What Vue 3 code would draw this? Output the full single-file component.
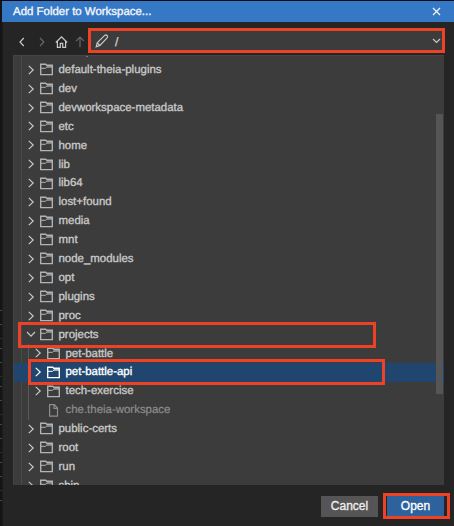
<script setup>
const names = [
  'default-theia-plugins', 'dev', 'devworkspace-metadata', 'etc', 'home', 'lib', 'lib64',
  'lost+found', 'media', 'mnt', 'node_modules', 'opt', 'plugins', 'proc',
]
const rows = [
  ...names.map((name) => ({ name })),
  { name: 'projects', open: true },
  { name: 'pet-battle', child: true },
  { name: 'pet-battle-api', child: true, selected: true },
  { name: 'tech-exercise', child: true },
  { name: 'che.theia-workspace', child: true, file: true },
  { name: 'public-certs' },
  { name: 'root' },
  { name: 'run' },
  { name: 'sbin' },
]
</script>

<template>
  <div class="screen">
    <div class="backdrop"><i v-for="n in 16" :key="n"></i></div>
    <div class="dialog">
      <header class="title">
        <span>Add Folder to Workspace...</span>
        <svg class="close" width="9" height="9" viewBox="0 0 9 9"><path d="M1 1l7 7M8 1L1 8" /></svg>
      </header>
      <nav class="toolbar">
        <svg width="8" height="12" viewBox="0 0 8 12"><path d="M5.8 2L2 6l3.8 4" /></svg>
        <svg class="dim fwd" width="8" height="12" viewBox="0 0 8 12"><path d="M2 2l3.8 4L2 10" /></svg>
        <svg class="home" width="13" height="12" viewBox="0 0 13 12"><path d="M.8 6.5L6.5 .9l5.7 5.6M2.4 5.2v6.1h2.9V7.4h2.4v3.9h2.9V5.2" /></svg>
        <svg class="dim up" width="10" height="12" viewBox="0 0 10 12"><path d="M5 11.2V1.3M1 5.2L5 1.2l4 4" /></svg>
        <div class="location">
          <svg width="14" height="14" viewBox="0 0 14 14"><path d="M1.2 12.8l1-4L9.7 1.4q1.3-.9 2.3.1t.1 2.3L4.9 11.4zM2.2 8.8l2.7 2.6" /></svg>
          <span>/</span>
          <svg class="drop" width="9" height="6" viewBox="0 0 9 6"><path d="M1 1l3.5 3.5L8 1" /></svg>
        </div>
      </nav>
      <main class="tree">
        <div class="speck"></div>
        <div v-for="r in rows" :key="r.name" class="row" :class="{ child: r.child, selected: r.selected, file: r.file }">
          <svg class="chevron" width="10" height="10" viewBox="0 0 10 10">
            <path v-if="r.open" d="M1 3l4 4.2L9 3" />
            <path v-else-if="!r.file" d="M2.8 .9L7.2 5 2.8 9.1" />
          </svg>
          <svg v-if="r.file" class="icon" width="13" height="13" viewBox="0 0 13 13"><path d="M2.6 .7h4.7l3.2 3.4v8H2.6zM7 .8v3.5h3.4" /></svg>
          <svg v-else class="icon folder" width="13" height="13" viewBox="0 0 13 13">
            <path d="M.7 1.2h5l1.1 1h5.5v9.4H.7z" />
            <path class="inner" d="M1 5.3h4.6l1.2-1.2H12" />
            <path class="tab" d="M6.6 2.4h5.6v1.6H6.6z" />
          </svg>
          <span>{{ r.name }}</span>
        </div>
        <div class="scrollbar"></div>
      </main>
      <footer class="actions">
        <button>Cancel</button>
        <button class="primary">Open</button>
      </footer>
    </div>
    <div class="mark mark-path"></div>
    <div class="mark mark-projects"></div>
    <div class="mark mark-api"></div>
    <div class="mark mark-open"></div>
  </div>
</template>

<style>
body { margin: 0; background: #111; }
</style>

<style scoped>
* { box-sizing: border-box; }
.screen {
  position: relative; display: flex; width: 454px; height: 526px; overflow: hidden;
  padding-top: 1px; background: #090a10; color: #c8c8c8;
  font: 11.45px/18.92px "Liberation Sans", Arial, sans-serif;
  text-rendering: geometricPrecision; -webkit-text-stroke: .35px currentColor;
}
svg { flex: none; fill: none; stroke: currentColor; stroke-width: 1.2; }
.backdrop { width: 2px; flex: none; background: #151515; padding-top: 309px; }
.backdrop i { display: block; width: 2px; height: 1px; margin-bottom: 13px; background: #444; }
.backdrop i:nth-child(3n) { margin-bottom: 9px; background: #303030; }
.dialog { flex: 1; display: flex; flex-direction: column; background: #252525; border-left: 1px solid #1c1c1c; }
.title {
  height: 21px; flex: none; margin-left: -1px; display: flex; align-items: center; justify-content: space-between;
  padding: 0 13px 0 11px; background: #3578c6; color: #f4f6fa;
}
.title span { padding-top: 2px; }
.toolbar { height: 33px; flex: none; display: flex; align-items: center; padding: 7px 9px 2px 15px; }
.toolbar > svg { position: relative; top: 1px; }
.dim { color: #686868; }
.fwd { margin-left: 12px; }
.home { margin-left: 9px; }
.up { margin-left: 7px; }
.location { flex: 1; height: 22px; margin-left: 6px; padding: 0 4px; display: flex; align-items: center; background: #3c3c3c; }
.location span { margin-left: 6px; padding-top: 2px; font-size: 12px; }
.drop { margin-left: auto; }
.tree {
  position: relative; height: 430px; flex: none; margin: 0 10px; padding-top: 4.3px; overflow: hidden;
  background: #3c3c3c; border: 1px solid #444; border-width: 1px 0 0 1px;
}
.tree::before { content: ""; position: absolute; top: 0; bottom: 0; left: 7px; width: 1px; background: #494949; }
.speck { position: absolute; top: 0; left: 72px; width: 2px; height: 1px; background: #777; }
.row { position: relative; height: 18.92px; display: flex; align-items: center; padding-left: 12px; white-space: nowrap; }
.row span { padding-top: 1.4px; }
.row.child { padding-left: 19px; }
.row.child::before { content: ""; position: absolute; left: 14px; top: 0; bottom: 0; width: 1px; background: #595959; }
.row.selected { background: #20466f; color: #fff; }
.row.file { color: #8d8d8d; -webkit-text-stroke-width: .2px; }
.chevron { margin-right: 4px; }
.icon { margin-right: 5.5px; }
.folder { color: #b4b4b4; stroke-width: 1.35; }
.selected .folder { color: #fff; }
.inner { stroke-width: 1; }
.tab { fill: currentColor; fill-opacity: .55; stroke: none; }
.scrollbar { position: absolute; right: 1px; top: 58px; width: 7px; height: 280px; background: #555; }
.actions { display: flex; gap: 9px; padding: 11px 10px 0 0; justify-content: flex-end; }
button {
  width: 57px; height: 21px; padding: 0; border: 0; background: #555; color: #eee;
  font: inherit; font-size: 12px; -webkit-text-stroke: .3px currentColor;
}
.primary { background: #2e629d; color: #fff; }
.mark { position: absolute; border: 3px solid #ee4227; }
.mark-path { left: 88px; top: 28px; width: 357px; height: 25px; }
.mark-projects { left: 18px; top: 322px; width: 358px; height: 26px; }
.mark-api { left: 28px; top: 359px; width: 357px; height: 26px; }
.mark-open { left: 383px; top: 493px; width: 67px; height: 26px; }
</style>
